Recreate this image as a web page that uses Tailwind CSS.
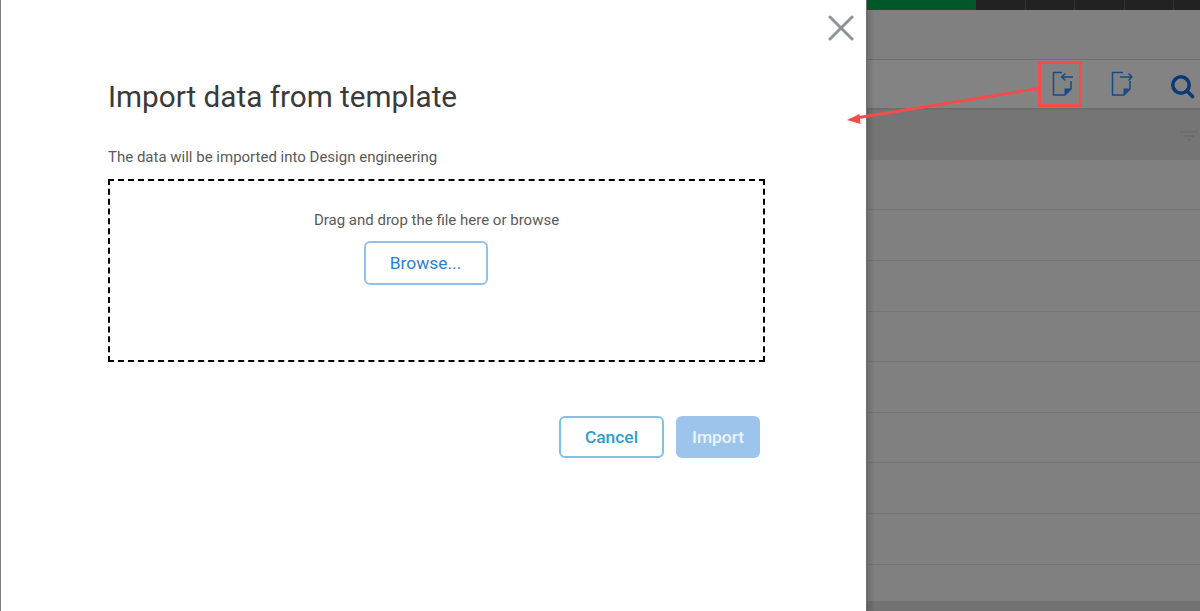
<!DOCTYPE html>
<html lang="en">
<head>
    <meta charset="UTF-8">
    <meta name="viewport" content="width=device-width, initial-scale=1.0">
    <title>Import data from template</title>
    <script src="https://cdn.jsdelivr.net/npm/@tailwindcss/browser@4"></script>
</head>
<body class="bg-[#808080] overflow-hidden font-['Roboto',sans-serif]">
    <div class="relative flex h-[611px] w-[1200px] overflow-hidden">
        <!-- Left edge of the page behind the dialog -->
        <div class="w-px bg-[#7a7a7a]"></div>

        <!-- Dialog -->
        <div class="relative w-[865px] h-full bg-white pl-[107px] pr-[101px] pt-[79px] shrink-0">
            <button class="absolute left-[827px] top-[15px]">
                <svg width="26" height="26" viewBox="0 0 26 26" fill="none" stroke="#8b9598" stroke-width="3" stroke-linecap="round"><path d="M2 2 L24 24 M24 2 L2 24"/></svg>
            </button>
            <h1 class="text-[29.7px] leading-[36px] text-[#3a3a3a]">Import data from template</h1>
            <p class="mt-[32px] text-[15px] leading-[20px] text-[#5a5a5a]">The data will be imported into Design engineering</p>
            <div class="mt-[12px] h-[183px] border-2 border-dashed border-black flex flex-col items-center pt-[29px]">
                <p class="text-[15px] leading-[20px] text-[#5a5a5a]">Drag and drop the file here or browse</p>
                <button class="mt-[11px] mr-[22px] w-[124px] h-[44px] border-2 border-[#93c1ee] rounded-[6px] text-[17.4px] text-[#2a7fdc]">Browse...</button>
            </div>
            <div class="mt-[54px] mr-[5px] flex justify-end gap-[12px]">
                <button class="w-[105px] h-[42px] border-2 border-[#7cc3e6] rounded-[6px] text-[17.4px] font-medium text-[#2f9bd2]">Cancel</button>
                <button class="w-[84px] h-[42px] rounded-[6px] bg-[#9dc5ec] text-[17.4px] font-medium text-white/80">Import</button>
            </div>
        </div>

        <!-- Page behind the overlay -->
        <div class="relative flex-1 flex flex-col min-w-0 border-l border-[#6f6f6f]">
            <div class="h-[10px] flex bg-[#222222]">
                <div class="w-[109px] bg-[#00582a]"></div>
                <div class="w-[50px] border-r border-[#333333]"></div>
                <div class="w-[49px] border-r border-[#333333]"></div>
                <div class="w-[50px] border-r border-[#333333]"></div>
                <div class="w-[49px] border-r border-[#333333]"></div>
            </div>
            <div class="h-[50px] bg-[#808080] border-b border-[#707070]"></div>
            <div class="relative h-[50px] bg-[#838383] border-b-2 border-[#6e6e6e]">
                <svg class="absolute left-[185px] top-[11px]" width="24" height="26" viewBox="0 0 24 26" fill="none" stroke="#1a4a85" stroke-width="1.5" stroke-linejoin="round">
                    <path d="M10 1.5H1.5V24H13L19 18V10"/>
                    <path d="M19 17.5L12.5 24V17.5Z" fill="#1a4a85" stroke="none"/>
                    <path d="M21 6H9.5M13.5 2.5L9.5 6L13.5 9.5"/>
                </svg>
                <svg class="absolute left-[244px] top-[11px]" width="24" height="26" viewBox="0 0 24 26" fill="none" stroke="#1a4a85" stroke-width="1.5" stroke-linejoin="round">
                    <path d="M12 1.5H1.5V24H13L19 18V10"/>
                    <path d="M19 17.5L12.5 24V17.5Z" fill="#1a4a85" stroke="none"/>
                    <path d="M9 6H21M17.5 2.5L21 6L17.5 9.5"/>
                </svg>
                <svg class="absolute left-[304px] top-[15px]" width="24" height="24" viewBox="0 0 24 24" fill="none" stroke="#0c3a78" stroke-width="3.6" stroke-linecap="round"><circle cx="10" cy="10" r="8.2"/><path d="M16.5 16.5L21.5 21.5"/></svg>
            </div>
            <div class="relative h-[50px] bg-[#757575]">
                <div class="absolute right-[2px] top-[21px] w-[18px] flex flex-col items-center gap-[2px]">
                    <div class="w-[18px] h-[2px] bg-[#6c6c6c]"></div>
                    <div class="w-[10px] h-[2px] bg-[#6c6c6c]"></div>
                    <div class="w-[4px] h-[2px] bg-[#6c6c6c]"></div>
                </div>
            </div>
            <div class="h-[50px] border-b border-[#767676]"></div>
            <div class="h-[51px] border-b border-[#767676]"></div>
            <div class="h-[51px] border-b border-[#767676]"></div>
            <div class="h-[50px] border-b border-[#767676]"></div>
            <div class="h-[51px] border-b border-[#767676]"></div>
            <div class="h-[50px] border-b border-[#767676]"></div>
            <div class="h-[51px] border-b border-[#767676]"></div>
            <div class="h-[51px] border-b border-[#767676]"></div>
            <div class="h-[36px]"></div>
            <div class="flex-1 bg-[#727272]"></div>
            <!-- Dialog shadow falling on the page -->
            <div class="absolute left-0 top-[10px] bottom-0 w-[8px] bg-gradient-to-r from-black/15 to-transparent"></div>
        </div>

        <!-- Red callout drawn over the screenshot -->
        <div class="absolute left-[1038px] top-[61px] w-[44px] h-[46px] border-[3px] border-[#f44c4c]"></div>
        <svg class="absolute left-[840px] top-[80px]" width="200" height="50" viewBox="0 0 200 50" fill="none">
            <path d="M198 8.5L16 38" stroke="#f44c4c" stroke-width="2.8"/>
            <path d="M7 40L19.5 34L20.5 44Z" fill="#f44c4c"/>
        </svg>
    </div>
</body>
</html>
